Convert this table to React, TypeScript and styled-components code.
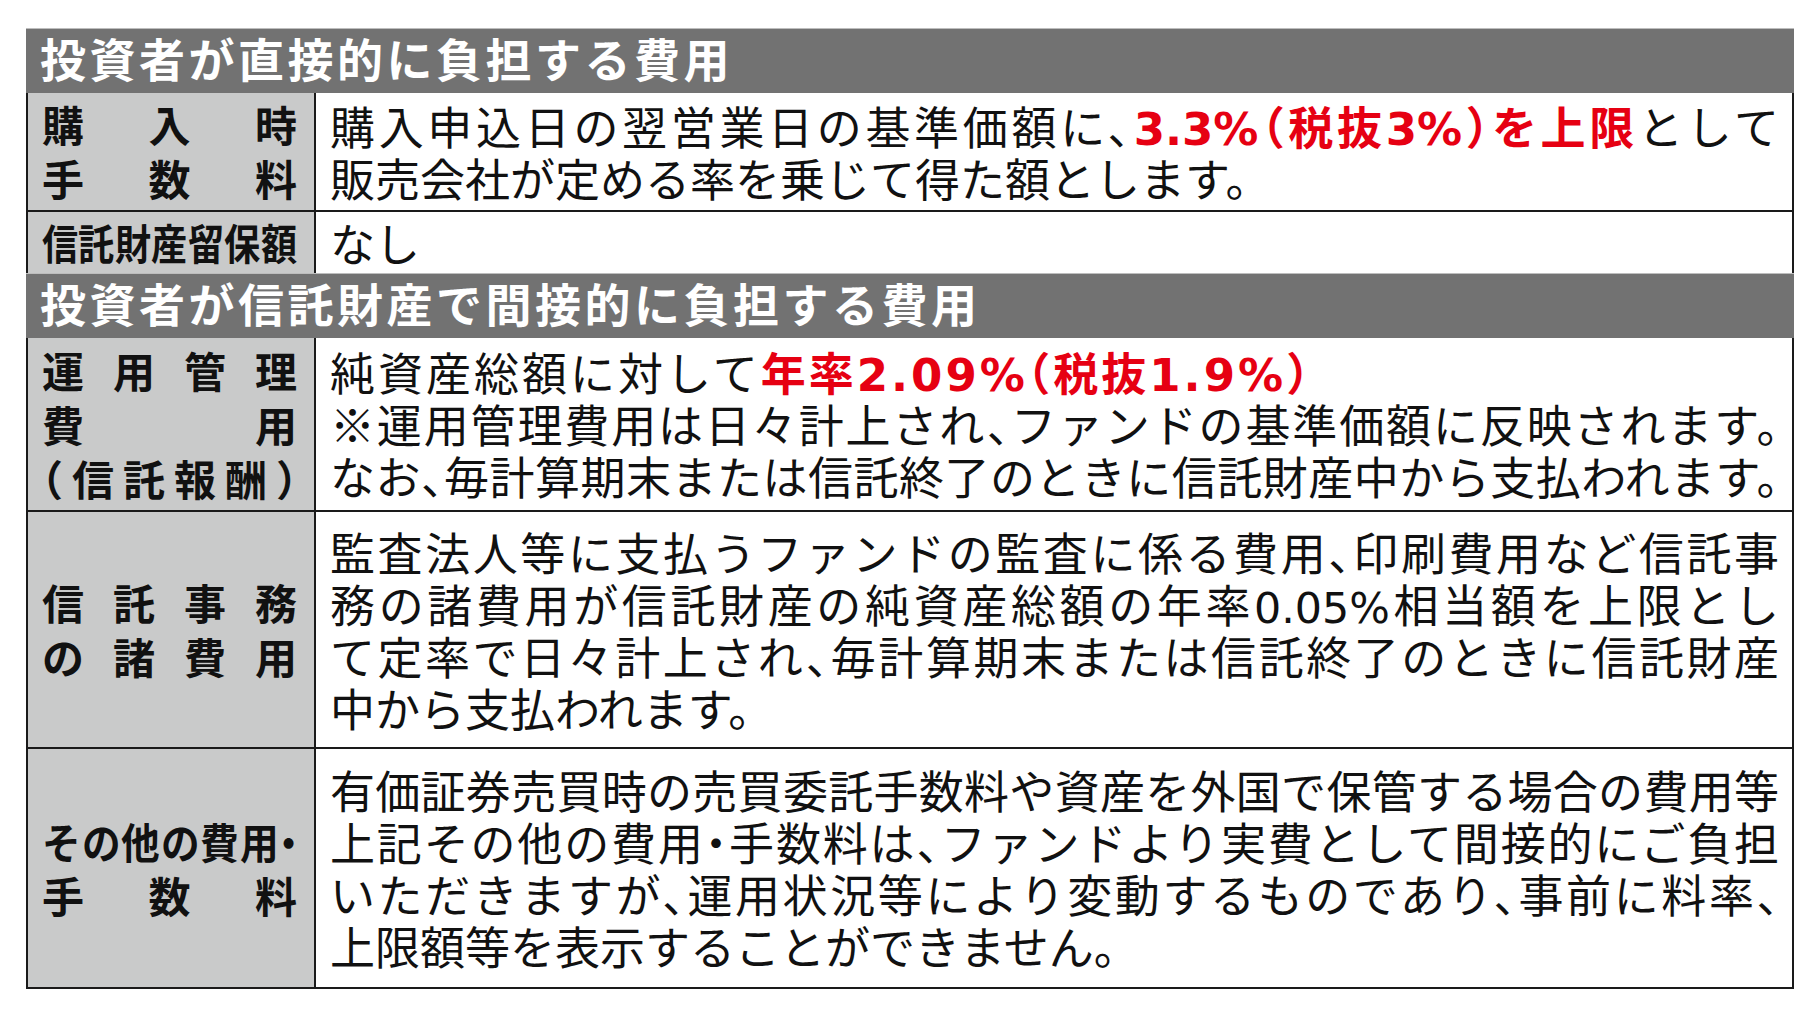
import React from 'react';
import styled, { createGlobalStyle, css } from 'styled-components';

const Global = createGlobalStyle`
  html, body { margin: 0; padding: 0; background: #ffffff; }
  body {
    font-family: "Liberation Sans", "Noto Sans CJK JP", sans-serif;
    color: #141414;
  }
`;

const Page = styled.div`
  width: 1820px;
  height: 1017px;
  box-sizing: border-box;
  padding: 28px 0 0 26px;
`;

const Table = styled.div`
  width: 1768px;
  display: flex;
  flex-direction: column;
`;

const SectionHeader = styled.div`
  height: 65px;
  box-sizing: border-box;
  background: #727272;
  border-top: 1px solid #bdbdbd;
  color: #ffffff;
  display: flex;
  align-items: center;
  padding-left: 14px;
  font-size: 46px;
  font-weight: 700;
  letter-spacing: 3.5px;
  line-height: 1;
`;

const Row = styled.div<{ $h: number; $open?: boolean }>`
  display: grid;
  grid-template-columns: 288px 1fr;
  height: ${(p) => p.$h}px;
  box-sizing: border-box;
  border-left: 2px solid #1a1a1a;
  border-right: 2px solid #1a1a1a;
  border-bottom: ${(p) => (p.$open ? 'none' : '2px solid #1a1a1a')};
`;

const LabelCell = styled.div`
  background: #c9caca;
  border-right: 2px solid #1a1a1a;
  padding: 7px 17px 0 14px;
  display: flex;
  flex-direction: column;
  justify-content: center;
  font-size: 42px;
  font-weight: 700;
  line-height: 54px;
  color: #111;
`;

const LabelLine = styled.div`
  display: flex;
  justify-content: space-between;
  white-space: nowrap;
`;

const Glyph = styled.span<{ $sx?: number }>`
  display: inline-block;
  font-feature-settings: "halt";
  transform-origin: left center;
  ${(p) =>
    p.$sx &&
    css`
      transform: scaleX(${p.$sx});
      margin-right: ${-(1 - p.$sx)}em;
    `}
`;

const BodyCell = styled.div`
  padding: 8px 13px 0 14px;
  display: flex;
  flex-direction: column;
  justify-content: center;
  font-size: 45px;
  font-weight: 400;
  line-height: 52px;
  font-feature-settings: "halt";
  color: #111;
`;

const Line = styled.div<{ $full?: boolean; $track?: number }>`
  text-align: ${(p) => (p.$full ? 'justify' : 'left')};
  text-align-last: ${(p) => (p.$full ? 'justify' : 'auto')};
  letter-spacing: ${(p) => p.$track ?? 0}px;
`;

const Hi = styled.span`
  color: #e60012;
  font-weight: 700;
`;

const Latin = styled.span<{ $size?: number }>`
  font-family: "DejaVu Sans", "Liberation Sans", sans-serif;
  font-size: ${(p) => p.$size ?? 1}em;
`;

type LabelSpec = { text: string; sx?: number }[];

const Label: React.FC<{ lines: LabelSpec }> = ({ lines }) => (
  <LabelCell>
    {lines.map((l, i) => (
      <LabelLine key={i}>
        {Array.from(l.text).map((ch, j) => (
          <Glyph key={j} $sx={l.sx}>
            {ch}
          </Glyph>
        ))}
      </LabelLine>
    ))}
  </LabelCell>
);

export default function App() {
  return (
    <>
      <Global />
      <Page>
        <Table>
          <SectionHeader>投資者が直接的に負担する費用</SectionHeader>

          <Row $h={119}>
            <Label lines={[{ text: '購入時' }, { text: '手数料' }]} />
            <BodyCell>
              <Line $full>
                購入申込日の翌営業日の基準価額に、
                <Hi>
                  <Latin>3.3%</Latin>（税抜<Latin>3%</Latin>）を上限
                </Hi>
                として
              </Line>
              <Line>販売会社が定める率を乗じて得た額とします。</Line>
            </BodyCell>
          </Row>

          <Row $h={61} $open>
            <Label lines={[{ text: '信託財産留保額', sx: 0.86 }]} />
            <BodyCell>
              <Line>なし</Line>
            </BodyCell>
          </Row>

          <SectionHeader>投資者が信託財産で間接的に負担する費用</SectionHeader>

          <Row $h={174}>
            <Label lines={[{ text: '運用管理' }, { text: '費用' }, { text: '（信託報酬）' }]} />
            <BodyCell>
              <Line $track={3}>
                純資産総額に対して
                <Hi>
                  年率<Latin>2.09%</Latin>（税抜<Latin>1.9%</Latin>）
                </Hi>
              </Line>
              <Line $full>※運用管理費用は日々計上され、ファンドの基準価額に反映されます。</Line>
              <Line $full>なお、毎計算期末または信託終了のときに信託財産中から支払われます。</Line>
            </BodyCell>
          </Row>

          <Row $h={237}>
            <Label lines={[{ text: '信託事務' }, { text: 'の諸費用' }]} />
            <BodyCell>
              <Line $full>監査法人等に支払うファンドの監査に係る費用、印刷費用など信託事</Line>
              <Line $full>
                務の諸費用が信託財産の純資産総額の年率<Latin $size={0.95}>0.05%</Latin>相当額を上限とし
              </Line>
              <Line $full>て定率で日々計上され、毎計算期末または信託終了のときに信託財産</Line>
              <Line>中から支払われます。</Line>
            </BodyCell>
          </Row>

          <Row $h={240}>
            <Label lines={[{ text: 'その他の費用・', sx: 0.92 }, { text: '手数料' }]} />
            <BodyCell>
              <Line $full>有価証券売買時の売買委託手数料や資産を外国で保管する場合の費用等</Line>
              <Line $full>上記その他の費用・手数料は、ファンドより実費として間接的にご負担</Line>
              <Line $full>いただきますが、運用状況等により変動するものであり、事前に料率、</Line>
              <Line>上限額等を表示することができません。</Line>
            </BodyCell>
          </Row>
        </Table>
      </Page>
    </>
  );
}
